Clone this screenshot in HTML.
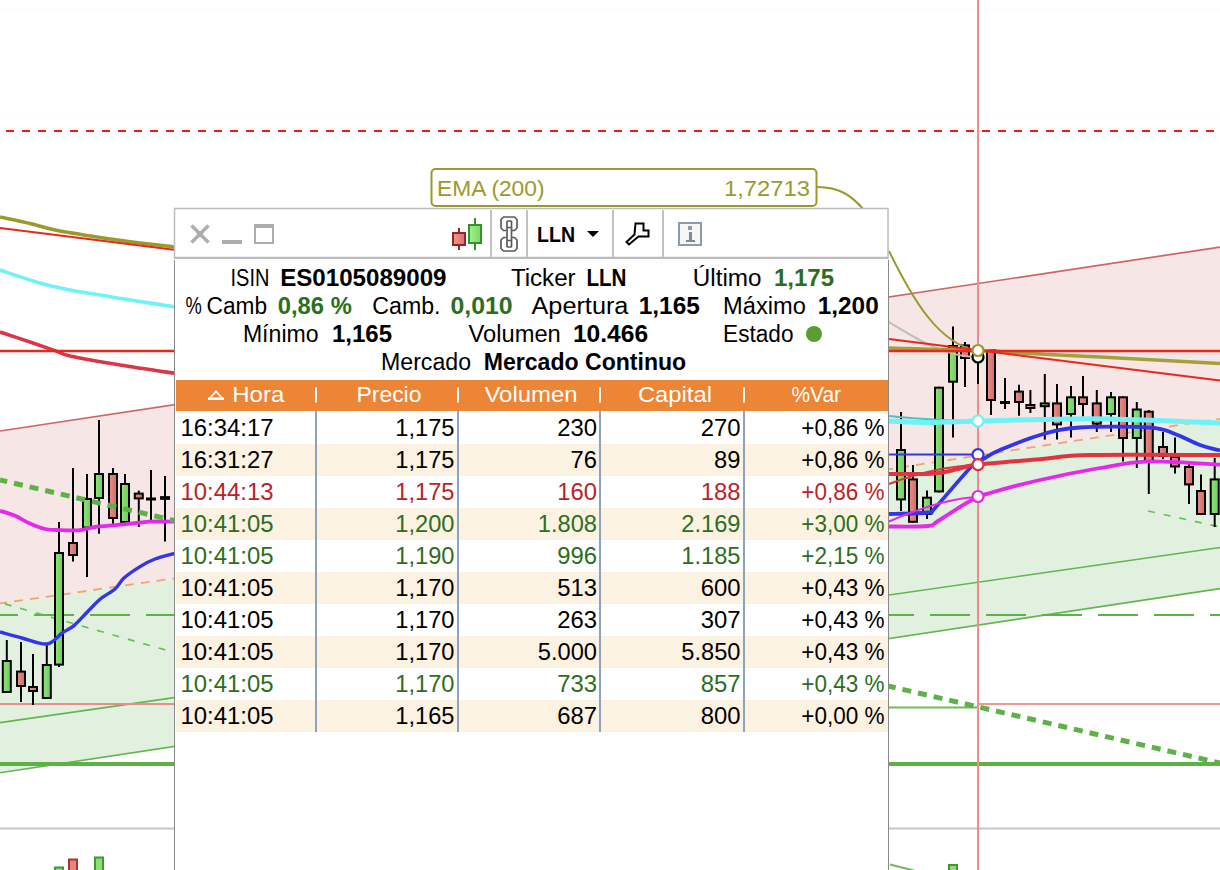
<!DOCTYPE html>
<html><head><meta charset="utf-8"><style>
html,body{margin:0;padding:0;background:#fff;overflow:hidden;width:1220px;height:870px;}
svg{display:block;}
text{font-family:"Liberation Sans",sans-serif;}
</style></head><body>
<svg width="1220" height="870" viewBox="0 0 1220 870">
<defs>
<linearGradient id="gr" x1="0" x2="1" y1="0" y2="0"><stop offset="0" stop-color="#f49490"/><stop offset="1" stop-color="#d87470"/></linearGradient>
<linearGradient id="gg" x1="0" x2="1" y1="0" y2="0"><stop offset="0" stop-color="#9cf488"/><stop offset="1" stop-color="#78d868"/></linearGradient>
<linearGradient id="cg" x1="0" x2="1" y1="0" y2="0"><stop offset="0" stop-color="#8ce678"/><stop offset="1" stop-color="#6ecc5e"/></linearGradient>
<linearGradient id="cr" x1="0" x2="1" y1="0" y2="0"><stop offset="0" stop-color="#ec8c86"/><stop offset="1" stop-color="#d06c66"/></linearGradient>
</defs>
<rect width="1220" height="870" fill="#fff"/>
<polygon points="0.0,431.0 1220.0,247.0 1220.0,418.8 1040.0,446.1 174.0,578.4 0.0,603.4" fill="#f6e6e6"/>
<polygon points="0.0,603.4 174.0,578.4 1040.0,446.1 1220.0,418.8 1220.0,588.6 0.0,772.8" fill="#e2f1df"/>
<line x1="0" y1="9" x2="1220" y2="9" stroke="#fbfbfb" stroke-width="1" />
<line x1="0" y1="118" x2="1220" y2="118" stroke="#fbfbfb" stroke-width="1" />
<line x1="6" y1="131" x2="1220" y2="131" stroke="#e5200e" stroke-width="2" stroke-dasharray="8 8"/>
<line x1="0" y1="431.0" x2="1220" y2="247.024" stroke="#d06464" stroke-width="1.7" />
<polyline points="0.0,603.4 174.0,578.4 1040.0,446.1 1220.0,418.8" fill="none" stroke="#f3a274" stroke-width="1.8" stroke-linejoin="round" stroke-linecap="butt" stroke-dasharray="9 7" stroke-dashoffset="1.8"/>
<line x1="0" y1="722.6" x2="1220" y2="547.53" stroke="#62b64e" stroke-width="1.6" />
<line x1="0" y1="772.8" x2="1220" y2="588.5799999999999" stroke="#62b64e" stroke-width="1.6" />
<line x1="0" y1="704" x2="174" y2="704" stroke="#e89088" stroke-width="2" />
<line x1="978" y1="704" x2="1220" y2="704" stroke="#ee9a94" stroke-width="2" />
<line x1="889" y1="707.5" x2="978" y2="707.5" stroke="#6cbd58" stroke-width="2" />
<line x1="-22" y1="615" x2="1220" y2="615" stroke="#5db147" stroke-width="2" stroke-dasharray="40 16"/>
<line x1="0" y1="764" x2="1220" y2="764" stroke="#5db147" stroke-width="4" />
<line x1="0" y1="828.5" x2="1220" y2="828.5" stroke="#c6c6c6" stroke-width="2" />
<rect x="55" y="867.5" width="8" height="3.5" fill="#8ede78" stroke="#3e9a30" stroke-width="2"/>
<rect x="69" y="859.5" width="8" height="11.5" fill="#e68680" stroke="#a83434" stroke-width="2"/>
<rect x="95" y="857.5" width="8" height="13.5" fill="#8ede78" stroke="#3e9a30" stroke-width="2"/>
<rect x="949" y="865" width="8" height="6" fill="#8ede78" stroke="#3e9a30" stroke-width="2"/>
<line x1="890" y1="864.5" x2="916" y2="871" stroke="#6cbd58" stroke-width="2" />
<line x1="0" y1="602.5" x2="176" y2="653" stroke="#6cbd58" stroke-width="1.7" stroke-dasharray="7 9" stroke-dashoffset="11"/>
<line x1="1148" y1="511" x2="1220" y2="527" stroke="#6cbd58" stroke-width="1.7" stroke-dasharray="7 9"/>
<line x1="6.8" y1="640" x2="6.8" y2="693" stroke="#000" stroke-width="2" />
<rect x="2.8" y="661" width="8" height="31" fill="url(#cg)" stroke="#000" stroke-width="2"/>
<line x1="21" y1="642" x2="21" y2="702" stroke="#000" stroke-width="2" />
<rect x="17" y="671.6" width="8" height="14.399999999999977" fill="url(#cr)" stroke="#000" stroke-width="2"/>
<line x1="33" y1="654" x2="33" y2="705" stroke="#000" stroke-width="2" />
<rect x="29" y="687" width="8" height="4" fill="url(#cr)" stroke="#000" stroke-width="2"/>
<line x1="46.8" y1="645" x2="46.8" y2="699" stroke="#000" stroke-width="2" />
<rect x="42.8" y="665" width="8" height="33" fill="url(#cg)" stroke="#000" stroke-width="2"/>
<line x1="59" y1="522" x2="59" y2="667" stroke="#000" stroke-width="2" />
<rect x="55" y="553" width="8" height="111.60000000000002" fill="url(#cg)" stroke="#000" stroke-width="2"/>
<line x1="73" y1="468" x2="73" y2="561.5" stroke="#000" stroke-width="2" />
<rect x="69" y="543" width="8" height="12" fill="url(#cr)" stroke="#000" stroke-width="2"/>
<line x1="87" y1="474" x2="87" y2="577" stroke="#000" stroke-width="2" />
<rect x="83" y="499" width="8" height="28.600000000000023" fill="url(#cg)" stroke="#000" stroke-width="2"/>
<line x1="99" y1="420" x2="99" y2="533.7" stroke="#000" stroke-width="2" />
<rect x="95" y="474" width="8" height="24" fill="url(#cg)" stroke="#000" stroke-width="2"/>
<line x1="113" y1="468" x2="113" y2="524" stroke="#000" stroke-width="2" />
<rect x="109" y="474" width="8" height="44" fill="url(#cr)" stroke="#000" stroke-width="2"/>
<line x1="125" y1="474" x2="125" y2="523" stroke="#000" stroke-width="2" />
<rect x="121" y="484" width="8" height="38" fill="url(#cg)" stroke="#000" stroke-width="2"/>
<line x1="138.8" y1="490.6" x2="138.8" y2="527" stroke="#000" stroke-width="2" />
<rect x="134.8" y="493.6" width="8" height="4.7999999999999545" fill="url(#cr)" stroke="#000" stroke-width="2"/>
<line x1="901" y1="412" x2="901" y2="511" stroke="#000" stroke-width="2" />
<rect x="897" y="450" width="8" height="49.39999999999998" fill="url(#cg)" stroke="#000" stroke-width="2"/>
<line x1="913" y1="465" x2="913" y2="522.8" stroke="#000" stroke-width="2" />
<rect x="909" y="479.4" width="8" height="42.39999999999998" fill="url(#cr)" stroke="#000" stroke-width="2"/>
<line x1="927" y1="490.6" x2="927" y2="519" stroke="#000" stroke-width="2" />
<rect x="923" y="497.7" width="8" height="16.30000000000001" fill="url(#cg)" stroke="#000" stroke-width="2"/>
<line x1="939" y1="386.7" x2="939" y2="492.4" stroke="#000" stroke-width="2" />
<rect x="935" y="387.7" width="8" height="103.69999999999999" fill="url(#cg)" stroke="#000" stroke-width="2"/>
<line x1="953" y1="326.4" x2="953" y2="437.4" stroke="#000" stroke-width="2" />
<rect x="949" y="346" width="8" height="35.69999999999999" fill="url(#cg)" stroke="#000" stroke-width="2"/>
<line x1="965" y1="342" x2="965" y2="387" stroke="#000" stroke-width="2" />
<rect x="961" y="345.4" width="8" height="12.600000000000023" fill="url(#cr)" stroke="#000" stroke-width="2"/>
<line x1="991" y1="349" x2="991" y2="415" stroke="#000" stroke-width="2" />
<rect x="987" y="350" width="8" height="50" fill="url(#cr)" stroke="#000" stroke-width="2"/>
<line x1="1019" y1="384.8" x2="1019" y2="415.8" stroke="#000" stroke-width="2" />
<rect x="1015" y="391.6" width="8" height="10.399999999999977" fill="url(#cr)" stroke="#000" stroke-width="2"/>
<line x1="1030.4" y1="390" x2="1030.4" y2="413" stroke="#000" stroke-width="2" />
<rect x="1026.4" y="405" width="8" height="3" fill="url(#cr)" stroke="#000" stroke-width="2"/>
<line x1="1044.8" y1="374" x2="1044.8" y2="439.6" stroke="#000" stroke-width="2" />
<rect x="1040.8" y="403.4" width="8" height="2.8000000000000114" fill="url(#cg)" stroke="#000" stroke-width="2"/>
<line x1="1057" y1="384" x2="1057" y2="439.6" stroke="#000" stroke-width="2" />
<rect x="1053" y="403.4" width="8" height="21.0" fill="url(#cr)" stroke="#000" stroke-width="2"/>
<line x1="1071" y1="386" x2="1071" y2="437.4" stroke="#000" stroke-width="2" />
<rect x="1067" y="397.3" width="8" height="16.69999999999999" fill="url(#cg)" stroke="#000" stroke-width="2"/>
<line x1="1083" y1="376" x2="1083" y2="416.6" stroke="#000" stroke-width="2" />
<rect x="1079" y="397.3" width="8" height="6.699999999999989" fill="url(#cr)" stroke="#000" stroke-width="2"/>
<line x1="1096.8" y1="390" x2="1096.8" y2="432" stroke="#000" stroke-width="2" />
<rect x="1092.8" y="403.4" width="8" height="20.30000000000001" fill="url(#cr)" stroke="#000" stroke-width="2"/>
<line x1="1111" y1="392" x2="1111" y2="432" stroke="#000" stroke-width="2" />
<rect x="1107" y="397.3" width="8" height="16.69999999999999" fill="url(#cg)" stroke="#000" stroke-width="2"/>
<line x1="1123" y1="396.3" x2="1123" y2="461.4" stroke="#000" stroke-width="2" />
<rect x="1119" y="397.3" width="8" height="40.69999999999999" fill="url(#cr)" stroke="#000" stroke-width="2"/>
<line x1="1136.8" y1="402" x2="1136.8" y2="468" stroke="#000" stroke-width="2" />
<rect x="1132.8" y="409.5" width="8" height="28.5" fill="url(#cg)" stroke="#000" stroke-width="2"/>
<line x1="1148.8" y1="410" x2="1148.8" y2="494" stroke="#000" stroke-width="2" />
<rect x="1144.8" y="411.7" width="8" height="50.30000000000001" fill="url(#cr)" stroke="#000" stroke-width="2"/>
<line x1="1163" y1="432" x2="1163" y2="459" stroke="#000" stroke-width="2" />
<rect x="1159" y="447" width="8" height="9" fill="url(#cr)" stroke="#000" stroke-width="2"/>
<line x1="1175" y1="437.4" x2="1175" y2="473.4" stroke="#000" stroke-width="2" />
<rect x="1171" y="457" width="8" height="9.5" fill="url(#cr)" stroke="#000" stroke-width="2"/>
<line x1="1189" y1="463.6" x2="1189" y2="504" stroke="#000" stroke-width="2" />
<rect x="1185" y="467" width="8" height="17.399999999999977" fill="url(#cr)" stroke="#000" stroke-width="2"/>
<line x1="1201" y1="474.5" x2="1201" y2="515" stroke="#000" stroke-width="2" />
<rect x="1197" y="491" width="8" height="23" fill="url(#cr)" stroke="#000" stroke-width="2"/>
<line x1="1214.7" y1="458" x2="1214.7" y2="527" stroke="#000" stroke-width="2" />
<rect x="1210.7" y="479.4" width="8" height="34.60000000000002" fill="url(#cg)" stroke="#000" stroke-width="2"/>
<line x1="151" y1="470" x2="151" y2="520" stroke="#000" stroke-width="2" />
<line x1="146" y1="499" x2="156" y2="499" stroke="#000" stroke-width="3" />
<line x1="165" y1="476" x2="165" y2="541.5" stroke="#000" stroke-width="2" />
<line x1="160" y1="498" x2="170" y2="498" stroke="#000" stroke-width="3" />
<line x1="160" y1="498" x2="170" y2="498" stroke="#000" stroke-width="3.4" />
<line x1="1005" y1="378" x2="1005" y2="409" stroke="#000" stroke-width="2" />
<line x1="1000" y1="402.5" x2="1010" y2="402.5" stroke="#000" stroke-width="3" />
<path d="M0.0,217.0 C5.0,218.1 20.8,221.3 30.0,223.5 C39.2,225.7 43.3,227.7 55.0,230.0 C66.7,232.3 85.8,235.3 100.0,237.5 C114.2,239.7 127.3,241.4 140.0,243.0 C152.7,244.6 170.0,246.3 176.0,247.0" fill="none" stroke="#9a9a2c" stroke-width="3.6" stroke-linejoin="round" />
<line x1="0" y1="228" x2="176" y2="250" stroke="#e8261c" stroke-width="2" />
<path d="M0.0,270.0 C6.7,272.2 28.3,279.7 40.0,283.0 C51.7,286.3 60.0,288.0 70.0,290.0 C80.0,292.0 90.0,293.3 100.0,295.0 C110.0,296.7 117.3,298.0 130.0,300.0 C142.7,302.0 168.3,305.8 176.0,307.0" fill="none" stroke="#6ff2f6" stroke-width="3.6" stroke-linejoin="round" />
<path d="M0.0,332.0 C5.0,333.7 20.8,338.9 30.0,342.0 C39.2,345.1 48.3,348.3 55.0,350.6 C61.7,352.9 59.2,353.6 70.0,356.0 C80.8,358.4 102.3,362.1 120.0,365.0 C137.7,367.9 166.7,372.1 176.0,373.5" fill="none" stroke="#dc3548" stroke-width="3.6" stroke-linejoin="round" />
<path d="M0.0,632.0 C3.7,633.0 14.2,636.0 22.0,638.0 C29.8,640.0 40.3,644.8 47.0,644.0 C53.7,643.2 57.5,636.1 62.0,633.0 C66.5,629.9 69.6,629.3 74.0,625.6 C78.4,621.9 84.1,615.2 88.5,610.8 C92.9,606.4 95.9,602.6 100.3,599.0 C104.7,595.4 111.0,592.5 115.0,589.0 C119.0,585.5 119.8,581.7 124.0,578.0 C128.2,574.3 134.8,569.8 140.0,566.6 C145.2,563.4 149.0,561.3 155.0,559.0 C161.0,556.7 172.5,554.0 176.0,553.0" fill="none" stroke="#3434e8" stroke-width="3.4" stroke-linejoin="round" />
<path d="M0.0,510.7 C2.5,511.5 10.0,513.6 15.0,515.8 C20.0,517.9 25.0,521.4 30.0,523.6 C35.0,525.8 40.0,527.9 45.0,529.0 C50.0,530.1 54.2,529.9 60.0,530.1 C65.8,530.3 74.2,530.6 80.0,530.1 C85.8,529.6 88.3,527.9 95.0,527.0 C101.7,526.1 110.8,525.6 120.0,524.7 C129.2,523.8 140.7,522.2 150.0,521.7 C159.3,521.2 171.7,521.7 176.0,521.7" fill="none" stroke="#e428ec" stroke-width="3.8" stroke-linejoin="round" />
<path d="M889,251 C912,298 938,344 978,351" fill="none" stroke="#9a9a2c" stroke-width="2"/>
<path d="M889,322 C912,336 942,356 974,357" fill="none" stroke="#bdbdbd" stroke-width="2"/>
<path d="M889.0,348.0 C903.8,348.4 952.8,349.5 978.0,350.5 C1003.2,351.5 1019.7,352.9 1040.0,354.0 C1060.3,355.1 1070.0,355.4 1100.0,357.0 C1130.0,358.6 1200.0,362.4 1220.0,363.5" fill="none" stroke="#a2a23c" stroke-width="3.5" stroke-linejoin="round" />
<line x1="889" y1="339" x2="1220" y2="380.6" stroke="#e8261c" stroke-width="2" />
<line x1="0" y1="351" x2="1220" y2="351" stroke="#e8261c" stroke-width="2.4" />
<path d="M889,416 C920,419 950,421 978,421" fill="none" stroke="#4cc0c4" stroke-width="2"/>
<path d="M889.0,421.0 C895.8,421.2 915.2,422.5 930.0,422.5 C944.8,422.5 959.7,421.5 978.0,421.0 C996.3,420.5 1018.0,419.8 1040.0,419.5 C1062.0,419.2 1080.0,418.4 1110.0,419.0 C1140.0,419.6 1201.7,422.3 1220.0,423.0" fill="none" stroke="#6ff2f6" stroke-width="5" stroke-linejoin="round" />
<line x1="889" y1="454.5" x2="978" y2="454.5" stroke="#3434e8" stroke-width="2" />
<path d="M889.0,514.0 C895.5,513.8 920.3,513.5 928.0,512.5 C935.7,511.5 927.7,515.8 935.0,508.0 C942.3,500.2 963.7,474.3 972.0,466.0 C980.3,457.7 980.3,460.7 985.0,458.0 C989.7,455.3 990.8,453.8 1000.0,450.0 C1009.2,446.2 1026.7,438.8 1040.0,435.0 C1053.3,431.2 1061.7,428.7 1080.0,427.5 C1098.3,426.3 1134.2,426.5 1150.0,427.6 C1165.8,428.7 1166.7,431.1 1175.0,434.0 C1183.3,436.9 1192.5,442.2 1200.0,445.0 C1207.5,447.8 1216.7,449.6 1220.0,450.5" fill="none" stroke="#3434e8" stroke-width="3.8" stroke-linejoin="round" />
<path d="M889,484 C915,474 945,466 978,465" fill="none" stroke="#e0343f" stroke-width="2"/>
<path d="M889.0,474.0 C896.7,473.9 923.5,474.3 935.0,473.5 C946.5,472.7 950.8,470.5 958.0,469.0 C965.2,467.5 964.3,466.2 978.0,464.6 C991.7,463.0 1021.3,460.8 1040.0,459.2 C1058.7,457.6 1060.0,455.7 1090.0,455.0 C1120.0,454.3 1198.3,455.0 1220.0,455.0" fill="none" stroke="#e0343f" stroke-width="4" stroke-linejoin="round" />
<path d="M889,521.5 C920,508 950,498 978,497" fill="none" stroke="#e428ec" stroke-width="2"/>
<path d="M889.0,526.5 C895.5,526.4 919.8,526.9 928.0,526.0 C936.2,525.1 931.0,525.2 938.0,521.0 C945.0,516.8 961.3,505.7 970.0,501.0 C978.7,496.3 978.3,496.5 990.0,493.0 C1001.7,489.5 1021.7,484.2 1040.0,480.0 C1058.3,475.8 1081.7,471.1 1100.0,468.0 C1118.3,464.9 1130.0,461.9 1150.0,461.4 C1170.0,460.8 1208.3,464.1 1220.0,464.7" fill="none" stroke="#e428ec" stroke-width="3.8" stroke-linejoin="round" />
<line x1="0" y1="480" x2="1220" y2="763" stroke="#5db147" stroke-width="5" stroke-dasharray="9 7" stroke-dashoffset="1.6"/>
<line x1="978" y1="0" x2="978" y2="870" stroke="#f08c8c" stroke-width="2" />
<line x1="978" y1="358" x2="978" y2="384" stroke="#000" stroke-width="2" />
<circle cx="978" cy="357" r="5.5" fill="#fff" stroke="#000" stroke-width="2.2"/>
<circle cx="978" cy="350.5" r="5.5" fill="#fff" stroke="#9a9a2c" stroke-width="2.2"/>
<circle cx="978" cy="421" r="5.5" fill="#fff" stroke="#6ff2f6" stroke-width="2.2"/>
<circle cx="978" cy="454.6" r="5.5" fill="#fff" stroke="#3434e8" stroke-width="2.2"/>
<circle cx="978" cy="464.7" r="5.5" fill="#fff" stroke="#e0303a" stroke-width="2.2"/>
<circle cx="978" cy="496.5" r="5.5" fill="#fff" stroke="#e428ec" stroke-width="2.2"/>
<path d="M817,187 C840,187 852,196 864,210" fill="none" stroke="#9a9a2c" stroke-width="2"/>
<rect x="431.5" y="169" width="385" height="37" rx="4" fill="#fff" stroke="#9a9a2c" stroke-width="2"/>
<text x="437.0" y="195.7" font-size="22.5" fill="#9a9a2c" font-weight="normal" text-anchor="start" textLength="107.5" lengthAdjust="spacingAndGlyphs" >EMA (200)</text>
<text x="810.0" y="195.7" font-size="22.5" fill="#9a9a2c" font-weight="normal" text-anchor="end" textLength="86.0" lengthAdjust="spacingAndGlyphs" >1,72713</text>
<rect x="174" y="260" width="714.5" height="611" fill="#fff" />
<line x1="174.5" y1="260" x2="174.5" y2="870" stroke="#8a8a8a" stroke-width="1" />
<line x1="888.5" y1="260" x2="888.5" y2="870" stroke="#8a8a8a" stroke-width="1" />
<rect x="174.5" y="208.5" width="713.5" height="49" fill="#fff" stroke="#bcbcbc" stroke-width="1.5"/>
<line x1="174" y1="258" x2="888.5" y2="258" stroke="#bcbcbc" stroke-width="2" />
<path d="M191.5,225.5 L208.5,242.5 M208.5,225.5 L191.5,242.5" stroke="#adadad" stroke-width="3.2"/>
<rect x="197" y="231" width="6" height="6" fill="#adadad" />
<rect x="222" y="240" width="20" height="4" fill="#adadad" />
<rect x="255" y="225" width="18" height="18" fill="none" stroke="#adadad" stroke-width="2"/>
<rect x="254" y="224" width="20" height="4" fill="#adadad" />
<line x1="459" y1="228" x2="459" y2="250" stroke="#922626" stroke-width="2" />
<rect x="453" y="233" width="12" height="12" fill="url(#gr)" stroke="#922626" stroke-width="2"/>
<line x1="475" y1="218" x2="475" y2="250" stroke="#3a8e2c" stroke-width="2" />
<rect x="469" y="225" width="12" height="18" fill="url(#gg)" stroke="#3a8e2c" stroke-width="2"/>
<line x1="491" y1="210" x2="491" y2="257" stroke="#c2c2c2" stroke-width="2" />
<line x1="527" y1="210" x2="527" y2="257" stroke="#c2c2c2" stroke-width="2" />
<line x1="613" y1="210" x2="613" y2="257" stroke="#c2c2c2" stroke-width="2" />
<line x1="663" y1="210" x2="663" y2="257" stroke="#c2c2c2" stroke-width="2" />
<g fill="none" stroke="#5c5c5c" stroke-width="1.7" stroke-linejoin="round"><path d="M506,230.5 L503.5,230.5 L501,228 L501,219.5 L503.5,217 L514.5,217 L517,219.5 L517,228 L514.5,230.5 L512,230.5"/><path d="M506,237.5 L503.5,237.5 L501,240 L501,248.5 L503.5,251 L514.5,251 L517,248.5 L517,240 L514.5,237.5 L512,237.5"/><rect x="507" y="221" width="4.5" height="26" rx="0.8"/><path d="M507,227.5 L511.5,227.5 M507,240.5 L511.5,240.5"/></g>
<text x="537.0" y="241.6" font-size="22" fill="#000" font-weight="bold" text-anchor="start" textLength="38.0" lengthAdjust="spacingAndGlyphs" >LLN</text>
<path d="M587,231 L599,231 L593,237 Z" fill="#000"/>
<path d="M635.5,223.5 L643.5,223.5 L643.5,230.5 L648.5,230.5 L648.5,236.5 L638.5,236.5 L629,244.5 L626.5,242 L634.5,234.5 Z" fill="none" stroke="#000" stroke-width="2" stroke-linejoin="miter"/>
<rect x="679" y="223" width="22" height="22" fill="#f6f6f6" stroke="#8c9ba6" stroke-width="2"/>
<rect x="688" y="226" width="4" height="4" fill="#8c9ba6" />
<rect x="689" y="232" width="3" height="9" fill="#7d8c96" />
<rect x="686" y="240" width="9" height="2" fill="#7d8c96" />
<text x="230.5" y="286.0" font-size="23.5" fill="#000" font-weight="normal" text-anchor="start" textLength="38.9" lengthAdjust="spacingAndGlyphs" >ISIN</text>
<text x="280.2" y="286.0" font-size="23.5" fill="#000" font-weight="bold" text-anchor="start" textLength="166.3" lengthAdjust="spacingAndGlyphs" >ES0105089009</text>
<text x="510.9" y="286.0" font-size="23.5" fill="#000" font-weight="normal" text-anchor="start" textLength="64.7" lengthAdjust="spacingAndGlyphs" >Ticker</text>
<text x="586.4" y="286.0" font-size="23.5" fill="#000" font-weight="bold" text-anchor="start" textLength="40.1" lengthAdjust="spacingAndGlyphs" >LLN</text>
<text x="692.8" y="286.0" font-size="23.5" fill="#000" font-weight="normal" text-anchor="start" textLength="68.7" lengthAdjust="spacingAndGlyphs" >Último</text>
<text x="773.9" y="286.0" font-size="23.5" fill="#2c6e20" font-weight="bold" text-anchor="start" textLength="60.1" lengthAdjust="spacingAndGlyphs" >1,175</text>
<text x="185.5" y="314.0" font-size="23.5" fill="#000" font-weight="normal" text-anchor="start" textLength="16.3" lengthAdjust="spacingAndGlyphs" >%</text>
<text x="206.5" y="314.0" font-size="23.5" fill="#000" font-weight="normal" text-anchor="start" textLength="60.5" lengthAdjust="spacingAndGlyphs" >Camb</text>
<text x="277.8" y="314.0" font-size="23.5" fill="#2c6e20" font-weight="bold" text-anchor="start" textLength="74.0" lengthAdjust="spacingAndGlyphs" >0,86 %</text>
<text x="372.3" y="314.0" font-size="23.5" fill="#000" font-weight="normal" text-anchor="start" textLength="68.2" lengthAdjust="spacingAndGlyphs" >Camb.</text>
<text x="450.5" y="314.0" font-size="23.5" fill="#2c6e20" font-weight="bold" text-anchor="start" textLength="62.1" lengthAdjust="spacingAndGlyphs" >0,010</text>
<text x="531.5" y="314.0" font-size="23.5" fill="#000" font-weight="normal" text-anchor="start" textLength="96.9" lengthAdjust="spacingAndGlyphs" >Apertura</text>
<text x="638.7" y="314.0" font-size="23.5" fill="#000" font-weight="bold" text-anchor="start" textLength="61.1" lengthAdjust="spacingAndGlyphs" >1,165</text>
<text x="723.1" y="314.0" font-size="23.5" fill="#000" font-weight="normal" text-anchor="start" textLength="82.7" lengthAdjust="spacingAndGlyphs" >Máximo</text>
<text x="817.7" y="314.0" font-size="23.5" fill="#000" font-weight="bold" text-anchor="start" textLength="61.0" lengthAdjust="spacingAndGlyphs" >1,200</text>
<text x="242.9" y="341.5" font-size="23.5" fill="#000" font-weight="normal" text-anchor="start" textLength="75.7" lengthAdjust="spacingAndGlyphs" >Mínimo</text>
<text x="331.9" y="341.5" font-size="23.5" fill="#000" font-weight="bold" text-anchor="start" textLength="60.1" lengthAdjust="spacingAndGlyphs" >1,165</text>
<text x="468.5" y="341.5" font-size="23.5" fill="#000" font-weight="normal" text-anchor="start" textLength="92.3" lengthAdjust="spacingAndGlyphs" >Volumen</text>
<text x="572.9" y="341.5" font-size="23.5" fill="#000" font-weight="bold" text-anchor="start" textLength="75.2" lengthAdjust="spacingAndGlyphs" >10.466</text>
<text x="723.1" y="341.5" font-size="23.5" fill="#000" font-weight="normal" text-anchor="start" textLength="70.4" lengthAdjust="spacingAndGlyphs" >Estado</text>
<circle cx="814" cy="334" r="8" fill="#5a9e32"/>
<text x="381.0" y="369.5" font-size="23.5" fill="#000" font-weight="normal" text-anchor="start" textLength="90.0" lengthAdjust="spacingAndGlyphs" >Mercado</text>
<text x="483.8" y="369.5" font-size="23.5" fill="#000" font-weight="bold" text-anchor="start" textLength="202.4" lengthAdjust="spacingAndGlyphs" >Mercado Continuo</text>
<rect x="176" y="380" width="712" height="31" fill="#ec8536" />
<path d="M209.5,398.5 L216,391.5 L222.5,398.5" fill="none" stroke="#fff" stroke-width="1.8"/>
<rect x="208" y="397.5" width="16" height="2.5" fill="#fff" />
<rect x="315" y="387.5" width="2" height="15" fill="#fff" />
<rect x="457" y="387.5" width="2" height="15" fill="#fff" />
<rect x="599" y="387.5" width="2" height="15" fill="#fff" />
<rect x="743" y="387.5" width="2" height="15" fill="#fff" />
<text x="232.3" y="402.0" font-size="22.2" fill="#fff" font-weight="normal" text-anchor="start" textLength="51.9" lengthAdjust="spacingAndGlyphs" >Hora</text>
<text x="356.5" y="402.0" font-size="22.2" fill="#fff" font-weight="normal" text-anchor="start" textLength="64.9" lengthAdjust="spacingAndGlyphs" >Precio</text>
<text x="484.5" y="402.0" font-size="22.2" fill="#fff" font-weight="normal" text-anchor="start" textLength="93.0" lengthAdjust="spacingAndGlyphs" >Volumen</text>
<text x="637.9" y="402.0" font-size="22.2" fill="#fff" font-weight="normal" text-anchor="start" textLength="74.1" lengthAdjust="spacingAndGlyphs" >Capital</text>
<text x="791.5" y="402.0" font-size="22.2" fill="#fff" font-weight="normal" text-anchor="start" textLength="49.5" lengthAdjust="spacingAndGlyphs" >%Var</text>
<rect x="176" y="444" width="712" height="32" fill="#fbf2e2" />
<rect x="176" y="508" width="712" height="32" fill="#fbf2e2" />
<rect x="176" y="572" width="712" height="32" fill="#fbf2e2" />
<rect x="176" y="636" width="712" height="32" fill="#fbf2e2" />
<rect x="176" y="700" width="712" height="32" fill="#fbf2e2" />
<text x="180.5" y="435.7" font-size="23" fill="#000" font-weight="normal" text-anchor="start" textLength="93.0" lengthAdjust="spacingAndGlyphs" >16:34:17</text>
<text x="454.5" y="435.7" font-size="23" fill="#000" font-weight="normal" text-anchor="end" textLength="59.2" lengthAdjust="spacingAndGlyphs" >1,175</text>
<text x="597.0" y="435.7" font-size="23" fill="#000" font-weight="normal" text-anchor="end" textLength="39.8" lengthAdjust="spacingAndGlyphs" >230</text>
<text x="740.5" y="435.7" font-size="23" fill="#000" font-weight="normal" text-anchor="end" textLength="39.8" lengthAdjust="spacingAndGlyphs" >270</text>
<text x="884.5" y="435.7" font-size="23" fill="#000" font-weight="normal" text-anchor="end" textLength="83.2" lengthAdjust="spacingAndGlyphs" >+0,86 %</text>
<text x="180.5" y="467.7" font-size="23" fill="#000" font-weight="normal" text-anchor="start" textLength="93.0" lengthAdjust="spacingAndGlyphs" >16:31:27</text>
<text x="454.5" y="467.7" font-size="23" fill="#000" font-weight="normal" text-anchor="end" textLength="59.2" lengthAdjust="spacingAndGlyphs" >1,175</text>
<text x="597.0" y="467.7" font-size="23" fill="#000" font-weight="normal" text-anchor="end" textLength="26.4" lengthAdjust="spacingAndGlyphs" >76</text>
<text x="740.5" y="467.7" font-size="23" fill="#000" font-weight="normal" text-anchor="end" textLength="26.4" lengthAdjust="spacingAndGlyphs" >89</text>
<text x="884.5" y="467.7" font-size="23" fill="#000" font-weight="normal" text-anchor="end" textLength="83.2" lengthAdjust="spacingAndGlyphs" >+0,86 %</text>
<text x="180.5" y="499.7" font-size="23" fill="#bb2228" font-weight="normal" text-anchor="start" textLength="93.0" lengthAdjust="spacingAndGlyphs" >10:44:13</text>
<text x="454.5" y="499.7" font-size="23" fill="#bb2228" font-weight="normal" text-anchor="end" textLength="59.2" lengthAdjust="spacingAndGlyphs" >1,175</text>
<text x="597.0" y="499.7" font-size="23" fill="#bb2228" font-weight="normal" text-anchor="end" textLength="39.8" lengthAdjust="spacingAndGlyphs" >160</text>
<text x="740.5" y="499.7" font-size="23" fill="#bb2228" font-weight="normal" text-anchor="end" textLength="39.8" lengthAdjust="spacingAndGlyphs" >188</text>
<text x="884.5" y="499.7" font-size="23" fill="#bb2228" font-weight="normal" text-anchor="end" textLength="83.2" lengthAdjust="spacingAndGlyphs" >+0,86 %</text>
<text x="180.5" y="531.7" font-size="23" fill="#2c6e20" font-weight="normal" text-anchor="start" textLength="93.0" lengthAdjust="spacingAndGlyphs" >10:41:05</text>
<text x="454.5" y="531.7" font-size="23" fill="#2c6e20" font-weight="normal" text-anchor="end" textLength="59.2" lengthAdjust="spacingAndGlyphs" >1,200</text>
<text x="597.0" y="531.7" font-size="23" fill="#2c6e20" font-weight="normal" text-anchor="end" textLength="59.2" lengthAdjust="spacingAndGlyphs" >1.808</text>
<text x="740.5" y="531.7" font-size="23" fill="#2c6e20" font-weight="normal" text-anchor="end" textLength="59.2" lengthAdjust="spacingAndGlyphs" >2.169</text>
<text x="884.5" y="531.7" font-size="23" fill="#2c6e20" font-weight="normal" text-anchor="end" textLength="83.2" lengthAdjust="spacingAndGlyphs" >+3,00 %</text>
<text x="180.5" y="563.7" font-size="23" fill="#2c6e20" font-weight="normal" text-anchor="start" textLength="93.0" lengthAdjust="spacingAndGlyphs" >10:41:05</text>
<text x="454.5" y="563.7" font-size="23" fill="#2c6e20" font-weight="normal" text-anchor="end" textLength="59.2" lengthAdjust="spacingAndGlyphs" >1,190</text>
<text x="597.0" y="563.7" font-size="23" fill="#2c6e20" font-weight="normal" text-anchor="end" textLength="39.8" lengthAdjust="spacingAndGlyphs" >996</text>
<text x="740.5" y="563.7" font-size="23" fill="#2c6e20" font-weight="normal" text-anchor="end" textLength="59.2" lengthAdjust="spacingAndGlyphs" >1.185</text>
<text x="884.5" y="563.7" font-size="23" fill="#2c6e20" font-weight="normal" text-anchor="end" textLength="83.2" lengthAdjust="spacingAndGlyphs" >+2,15 %</text>
<text x="180.5" y="595.7" font-size="23" fill="#000" font-weight="normal" text-anchor="start" textLength="93.0" lengthAdjust="spacingAndGlyphs" >10:41:05</text>
<text x="454.5" y="595.7" font-size="23" fill="#000" font-weight="normal" text-anchor="end" textLength="59.2" lengthAdjust="spacingAndGlyphs" >1,170</text>
<text x="597.0" y="595.7" font-size="23" fill="#000" font-weight="normal" text-anchor="end" textLength="39.8" lengthAdjust="spacingAndGlyphs" >513</text>
<text x="740.5" y="595.7" font-size="23" fill="#000" font-weight="normal" text-anchor="end" textLength="39.8" lengthAdjust="spacingAndGlyphs" >600</text>
<text x="884.5" y="595.7" font-size="23" fill="#000" font-weight="normal" text-anchor="end" textLength="83.2" lengthAdjust="spacingAndGlyphs" >+0,43 %</text>
<text x="180.5" y="627.7" font-size="23" fill="#000" font-weight="normal" text-anchor="start" textLength="93.0" lengthAdjust="spacingAndGlyphs" >10:41:05</text>
<text x="454.5" y="627.7" font-size="23" fill="#000" font-weight="normal" text-anchor="end" textLength="59.2" lengthAdjust="spacingAndGlyphs" >1,170</text>
<text x="597.0" y="627.7" font-size="23" fill="#000" font-weight="normal" text-anchor="end" textLength="39.8" lengthAdjust="spacingAndGlyphs" >263</text>
<text x="740.5" y="627.7" font-size="23" fill="#000" font-weight="normal" text-anchor="end" textLength="39.8" lengthAdjust="spacingAndGlyphs" >307</text>
<text x="884.5" y="627.7" font-size="23" fill="#000" font-weight="normal" text-anchor="end" textLength="83.2" lengthAdjust="spacingAndGlyphs" >+0,43 %</text>
<text x="180.5" y="659.7" font-size="23" fill="#000" font-weight="normal" text-anchor="start" textLength="93.0" lengthAdjust="spacingAndGlyphs" >10:41:05</text>
<text x="454.5" y="659.7" font-size="23" fill="#000" font-weight="normal" text-anchor="end" textLength="59.2" lengthAdjust="spacingAndGlyphs" >1,170</text>
<text x="597.0" y="659.7" font-size="23" fill="#000" font-weight="normal" text-anchor="end" textLength="59.2" lengthAdjust="spacingAndGlyphs" >5.000</text>
<text x="740.5" y="659.7" font-size="23" fill="#000" font-weight="normal" text-anchor="end" textLength="59.2" lengthAdjust="spacingAndGlyphs" >5.850</text>
<text x="884.5" y="659.7" font-size="23" fill="#000" font-weight="normal" text-anchor="end" textLength="83.2" lengthAdjust="spacingAndGlyphs" >+0,43 %</text>
<text x="180.5" y="691.7" font-size="23" fill="#2c6e20" font-weight="normal" text-anchor="start" textLength="93.0" lengthAdjust="spacingAndGlyphs" >10:41:05</text>
<text x="454.5" y="691.7" font-size="23" fill="#2c6e20" font-weight="normal" text-anchor="end" textLength="59.2" lengthAdjust="spacingAndGlyphs" >1,170</text>
<text x="597.0" y="691.7" font-size="23" fill="#2c6e20" font-weight="normal" text-anchor="end" textLength="39.8" lengthAdjust="spacingAndGlyphs" >733</text>
<text x="740.5" y="691.7" font-size="23" fill="#2c6e20" font-weight="normal" text-anchor="end" textLength="39.8" lengthAdjust="spacingAndGlyphs" >857</text>
<text x="884.5" y="691.7" font-size="23" fill="#2c6e20" font-weight="normal" text-anchor="end" textLength="83.2" lengthAdjust="spacingAndGlyphs" >+0,43 %</text>
<text x="180.5" y="723.7" font-size="23" fill="#000" font-weight="normal" text-anchor="start" textLength="93.0" lengthAdjust="spacingAndGlyphs" >10:41:05</text>
<text x="454.5" y="723.7" font-size="23" fill="#000" font-weight="normal" text-anchor="end" textLength="59.2" lengthAdjust="spacingAndGlyphs" >1,165</text>
<text x="597.0" y="723.7" font-size="23" fill="#000" font-weight="normal" text-anchor="end" textLength="39.8" lengthAdjust="spacingAndGlyphs" >687</text>
<text x="740.5" y="723.7" font-size="23" fill="#000" font-weight="normal" text-anchor="end" textLength="39.8" lengthAdjust="spacingAndGlyphs" >800</text>
<text x="884.5" y="723.7" font-size="23" fill="#000" font-weight="normal" text-anchor="end" textLength="83.2" lengthAdjust="spacingAndGlyphs" >+0,00 %</text>
<line x1="316" y1="411" x2="316" y2="732" stroke="#8ba3bd" stroke-width="2" />
<line x1="458" y1="411" x2="458" y2="732" stroke="#8ba3bd" stroke-width="2" />
<line x1="600" y1="411" x2="600" y2="732" stroke="#8ba3bd" stroke-width="2" />
<line x1="744" y1="411" x2="744" y2="732" stroke="#8ba3bd" stroke-width="2" />
</svg></body></html>
